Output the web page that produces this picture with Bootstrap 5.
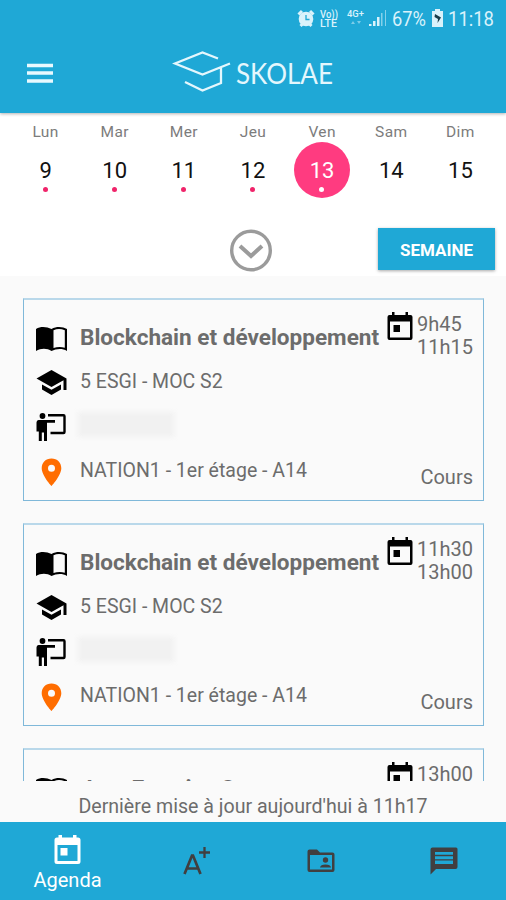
<!DOCTYPE html>
<html lang="fr">
<head>
<meta charset="utf-8">
<meta name="viewport" content="width=device-width, initial-scale=1">
<title>Skolae</title>
<link rel="stylesheet" href="https://cdn.jsdelivr.net/npm/bootstrap@5.3.0/dist/css/bootstrap.min.css">
<style>
  body { font-family: Roboto, "Liberation Sans", sans-serif; height: 900px; background: #fafafa; color: #6c6c6c; }
  svg { display: block; flex: none; }
  .blue { background: #1fa8d6; }
  .app-head { height: 113px; box-shadow: 0 1px 3px rgba(0,0,0,.3); z-index: 2; }
  .status { height: 38px; padding: 0 8px 0 0; }
  .brandbar { height: 75px; padding-left: 27px; }
  .brand { margin-left: 119px; }
  .week { height: 163px; }
  .days { padding: 0 11px; height: 115px; }
  .day { height: 86px; padding-top: 9px; }
  .day small { font-size: 15.5px; line-height: 20px; letter-spacing: .4px; color: #7c7c7c; }
  .num { width: 56px; height: 56px; font-size: 22px; line-height: 57px; color: #111; }
  .num.on { background: #ff3b80; color: #fff; }
  .dot { width: 5px; height: 5px; background: #f0246a; left: 25px; top: 45px; }
  .on .dot { background: #fff; left: 24.5px; }
  .tools { padding: 0 11px 0 229px; height: 43px; }
  .week-btn { width: 117px; height: 42px; padding-top: 4px; font-size: 17px; color: #fff; box-shadow: 0 1px 3px rgba(0,0,0,.35); }
  .agenda { height: 505px; padding: 22px 22px 0 23px; gap: 22px; }
  .course { height: 203px; flex: none; border: 1px solid #7fb8d9; border-top: 2px solid #b9d8ea; padding: 12px 10px 0 11px; }
  .lines { font-size: 19.5px; padding-top: 3px; }
  .line { height: 44.5px; gap: 12px; white-space: nowrap; }
  .line svg { width: 33px; margin-top: 2px; }
  .title { font-size: 22.55px; padding-top: 2px; }
  .title.next { letter-spacing: -.4px; padding-top: 4px; }
  .hidden-name { width: 96px; height: 25px; background: #f1f1f1; filter: blur(2px); margin: -3px 0 0 -2px; }
  .side { width: 86px; font-size: 20px; line-height: 23px; }
  .side .when { padding-top: 1px; }
  .kind { margin-bottom: 11px; }
  .update { height: 41px; padding-top: 12px; font-size: 19.6px; line-height: 28px; }
  .tabs { height: 78px; color: #413f40; }
  .tab-on { width: 135px; padding-top: 13px; font-size: 20px; line-height: 30px; color: #fff; }
</style>
</head>
<body class="d-flex flex-column overflow-hidden">
<svg width="0" height="0" class="position-absolute">
  <defs>
    <symbol id="book" viewBox="0 0 33 28"><path d="M1 4C6 1 12 2 16.500 4C22 1 28 2 32 4V26C27 23 21 24 16.500 26C12 23 6 23 1 26Z" fill="#000"/><path d="M18.500 5.300C22 3.600 26 3.700 29.800 5.200V22.700C26 21.500 22 21.700 18.500 23Z" fill="#fafafa"/></symbol>
    <symbol id="cap" viewBox="0 0 33 28"><path d="M16.500 1L1.500 9.500L16.500 18L28.500 11.200V21H31.500V9.500ZM7 15.500V20.500L16.500 26L26 20.500V15.500L16.500 20.800Z" fill="#000"/></symbol>
    <symbol id="teach" viewBox="0 0 33 30"><circle cx="7.500" cy="4" r="2.900"/><path d="M3.500 8H20V10.800H12V29H9V20.500H6.800V29H3.800V19.500H1.500V10.500Q1.500 8 3.500 8Z"/><path d="M13 3.200H28.500Q29.500 3.200 29.500 4.200V20Q29.500 21 28.500 21H15.500" fill="none" stroke="#000" stroke-width="2.400"/></symbol>
    <symbol id="pin" viewBox="0 0 33 30"><path d="M16.500 1.500C10.700 1.500 6.700 5.700 6.700 11.200C6.700 18.500 16.500 29 16.500 29S26.300 18.500 26.300 11.200C26.300 5.700 22.300 1.500 16.500 1.500ZM16.500 7.800A3.500 3.500 0 1 1 16.500 14.800A3.500 3.500 0 0 1 16.500 7.800Z" fill="#ff6d00" fill-rule="evenodd"/></symbol>
    <symbol id="cal" viewBox="0 0 26 29"><path d="M5 0H7.500V3H18.500V0H21V3H23.500Q25.500 3 25.500 5V26Q25.500 28 23.500 28H2.500Q.5 28 .5 26V5Q.5 3 2.500 3H5ZM3 9.500V25.500H23V9.500ZM6.500 13H13V20H6.500Z" fill="currentColor" fill-rule="evenodd"/></symbol>
  </defs>
</svg>

<header class="app-head blue position-relative flex-shrink-0">
  <div class="status d-flex justify-content-end align-items-center">
    <svg width="211" height="38" viewBox="0 0 211 38" fill="#d9f2fb" font-family="Roboto, sans-serif">
      <circle cx="19" cy="19" r="7.300"/><path d="M11.500 14.500L15 11M26.500 14.500L23 11M13.500 26L16 23.500M24.500 26L22 23.500" stroke="#d9f2fb" stroke-width="3"/><path d="M19 15V19.500H22.500" fill="none" stroke="#1fa8d6" stroke-width="1.300"/>
      <text x="33" y="17.500" font-size="10" textLength="18" lengthAdjust="spacingAndGlyphs" font-weight="500">Vo))</text>
      <text x="33" y="27" font-size="10" textLength="17" lengthAdjust="spacingAndGlyphs" font-weight="500">LTE</text>
      <text x="60" y="17" font-size="9" textLength="17" lengthAdjust="spacingAndGlyphs" font-weight="500">4G+</text>
      <path d="M64 24L66 21L68 24ZM70 21H74L72 24Z" opacity=".5"/>
      <path d="M82 26V24H84.500V26ZM86 26V21H88.500V26ZM90 26V17H92.500V26Z"/><path d="M94 26V13H95.500V26ZM98 26V10H99V26Z" opacity=".55"/>
      <text x="105" y="26" font-size="20" textLength="34" lengthAdjust="spacingAndGlyphs">67%</text>
      <path d="M145 11H148V9H153V11H156V27H145Z"/><path d="M148 14L154 17.500L150.500 23L151 19L147.500 17Z" fill="#173b48"/>
      <text x="161" y="26" font-size="20" textLength="46" lengthAdjust="spacingAndGlyphs">11:18</text>
    </svg>
  </div>
  <div class="brandbar d-flex align-items-start">
    <svg width="26" height="60" viewBox="0 0 26 60" stroke="#e9f9ff" stroke-width="3.600"><path d="M0 27.500H26M0 35H26M0 43H26"/></svg>
    <svg class="brand" width="168" height="60" viewBox="0 0 168 60">
      <path d="M46 20.500L30.500 14.500L3 25.500L30.500 36.500L58 25.500M49 29.500V45L30.500 52.500L13 44" fill="none" stroke="#e4f7fd" stroke-width="2.300"/>
      <text x="64" y="46" font-family="Lato, sans-serif" font-size="28" fill="#e4f7fd" textLength="97" lengthAdjust="spacingAndGlyphs">SKOLAE</text>
    </svg>
  </div>
</header>

<section class="week bg-white flex-shrink-0">
  <div class="days d-flex text-center">
    <div class="day col d-flex flex-column align-items-center"><small>Lun</small><div class="num rounded-circle position-relative">9<i class="dot position-absolute rounded-circle"></i></div></div>
    <div class="day col d-flex flex-column align-items-center"><small>Mar</small><div class="num rounded-circle position-relative">10<i class="dot position-absolute rounded-circle"></i></div></div>
    <div class="day col d-flex flex-column align-items-center"><small>Mer</small><div class="num rounded-circle position-relative">11<i class="dot position-absolute rounded-circle"></i></div></div>
    <div class="day col d-flex flex-column align-items-center"><small>Jeu</small><div class="num rounded-circle position-relative">12<i class="dot position-absolute rounded-circle"></i></div></div>
    <div class="day col d-flex flex-column align-items-center"><small>Ven</small><div class="num on rounded-circle position-relative">13<i class="dot position-absolute rounded-circle"></i></div></div>
    <div class="day col d-flex flex-column align-items-center"><small>Sam</small><div class="num rounded-circle">14</div></div>
    <div class="day col d-flex flex-column align-items-center"><small>Dim</small><div class="num rounded-circle">15</div></div>
  </div>
  <div class="tools d-flex justify-content-between align-items-start">
    <svg width="44" height="44" viewBox="0 0 44 44" fill="none" stroke="#9b9b9b"><circle cx="22" cy="22.500" r="19.300" stroke-width="3.400"/><path d="M11 18L22 28L33 18" stroke-width="4"/></svg>
    <button class="week-btn btn blue rounded-0 border-0 px-0 pb-0 fw-bold">SEMAINE</button>
  </div>
</section>

<main class="agenda d-flex flex-column overflow-hidden flex-shrink-0">
  <article class="course d-flex">
    <div class="lines flex-grow-1">
      <div class="line title fw-bold d-flex align-items-center"><svg height="28"><use href="#book"/></svg><span>Blockchain et développement</span></div>
      <div class="line d-flex align-items-center"><svg height="28"><use href="#cap"/></svg><span>5 ESGI - MOC S2</span></div>
      <div class="line d-flex align-items-center"><svg height="30"><use href="#teach"/></svg><div class="hidden-name"></div></div>
      <div class="line d-flex align-items-center"><svg height="30"><use href="#pin"/></svg><span>NATION1 - 1er étage - A14</span></div>
    </div>
    <div class="side d-flex flex-column justify-content-between">
      <div class="d-flex gap-1"><svg width="26" height="29" class="text-black"><use href="#cal"/></svg><div class="when">9h45<br>11h15</div></div>
      <div class="kind text-end">Cours</div>
    </div>
  </article>
  <article class="course d-flex">
    <div class="lines flex-grow-1">
      <div class="line title fw-bold d-flex align-items-center"><svg height="28"><use href="#book"/></svg><span>Blockchain et développement</span></div>
      <div class="line d-flex align-items-center"><svg height="28"><use href="#cap"/></svg><span>5 ESGI - MOC S2</span></div>
      <div class="line d-flex align-items-center"><svg height="30"><use href="#teach"/></svg><div class="hidden-name"></div></div>
      <div class="line d-flex align-items-center"><svg height="30"><use href="#pin"/></svg><span>NATION1 - 1er étage - A14</span></div>
    </div>
    <div class="side d-flex flex-column justify-content-between">
      <div class="d-flex gap-1"><svg width="26" height="29" class="text-black"><use href="#cal"/></svg><div class="when">11h30<br>13h00</div></div>
      <div class="kind text-end">Cours</div>
    </div>
  </article>
  <article class="course d-flex">
    <div class="lines flex-grow-1">
      <div class="line title next fw-bold d-flex align-items-center"><svg height="28"><use href="#book"/></svg><span>Java Examine Concept</span></div>
    </div>
    <div class="side">
      <div class="d-flex gap-1"><svg width="26" height="29" class="text-black"><use href="#cal"/></svg><div class="when">13h00</div></div>
    </div>
  </article>
</main>

<div class="update text-center flex-shrink-0">Dernière mise à jour aujourd'hui à 11h17</div>

<nav class="tabs blue d-flex flex-shrink-0">
  <div class="tab-on d-flex flex-column align-items-center"><svg width="27" height="30" viewBox="0 0 27 30"><path d="M4.500 0H8V2.500H19V0H22.500V2.500H24Q26.500 2.500 26.500 5V26.500Q26.500 29 24 29H3Q.5 29 .5 26.500V5Q.5 2.500 3 2.500H4.500ZM3.500 10V26H23.500V10ZM6.500 13H13.500V20.500H6.500Z" fill="#fff" fill-rule="evenodd"/></svg>Agenda</div>
  <div class="col d-flex align-items-center justify-content-center"><svg width="28" height="32" viewBox="0 0 28 32" fill="none" stroke="#413f40" stroke-width="2.700"><path d="M1.500 29L9 10.500H10L17.500 29M4.500 23.500H14.500"/><path d="M21.500 2V13M16 7.500H27" stroke-width="2.300"/></svg></div>
  <div class="col d-flex align-items-center justify-content-center"><svg width="28" height="24" viewBox="0 0 28 24" fill="#413f40"><path d="M2.500.5H10L13 3.500H25.500Q27.500 3.500 27.500 5.500V21Q27.500 23 25.500 23H2.500Q.5 23 .5 21V2.500Q.5.5 2.500.5ZM3 6V20.500H25V6Z" fill-rule="evenodd"/><circle cx="18.500" cy="11" r="2.700"/><path d="M13 18.500Q13.500 15.500 18.500 15.500T24 18.500Z"/></svg></div>
  <div class="col d-flex align-items-center justify-content-center"><svg width="28" height="28" viewBox="0 0 28 28"><path d="M2.500.5H26Q27.500.5 27.500 2V20Q27.500 22 25.500 22H6L.5 27.500V2.500Q.5.5 2.500.5ZM5 5V7.800H23V5ZM5 9.200V12.200H23V9.200ZM5 13.600V17H23V13.600Z" fill="#413f40" fill-rule="evenodd"/></svg></div>
</nav>
<script src="https://cdn.jsdelivr.net/npm/bootstrap@5.3.0/dist/js/bootstrap.bundle.min.js"></script>
</body>
</html>
